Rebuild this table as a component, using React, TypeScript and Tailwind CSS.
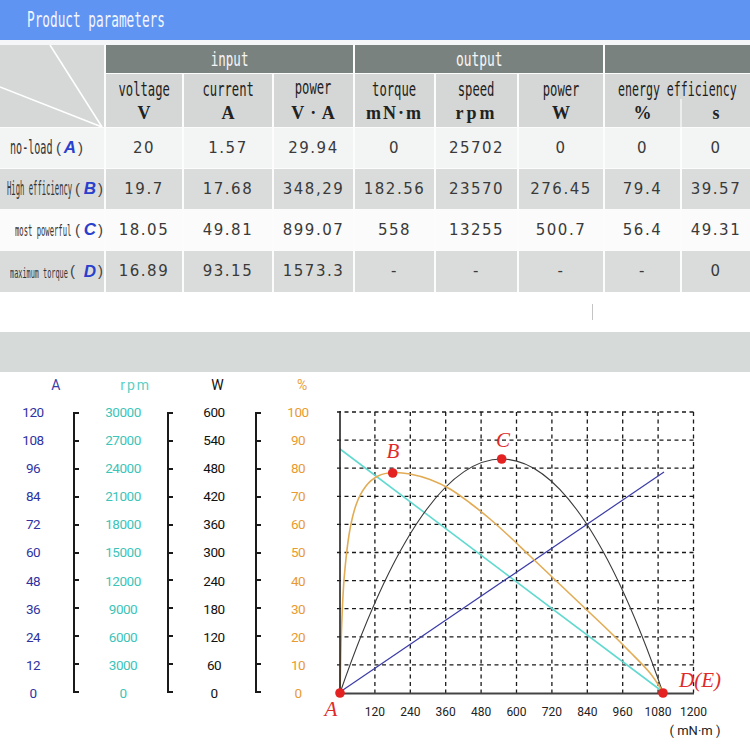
import React from "react";

const mono = "font-['DejaVu_Sans_Mono',monospace]";

function C({ children, cls }: { children: React.ReactNode; cls: string }) {
  return <span className={`inline-block whitespace-nowrap ${cls}`}>{children}</span>;
}

function H2({ label, unit, unitCls = "", labelCls = "scale-x-[0.61]" }: { label: string; unit: string; unitCls?: string; labelCls?: string }) {
  return (
    <div className="bg-[#d4d7d6] flex flex-col items-center pt-[5px]">
      <div className="h-[20px] w-full flex items-center justify-center">
        <C cls={`${mono} text-[20px] leading-[20px] text-[#1e1e1e] ${labelCls}`}>{label}</C>
      </div>
      <div className={`mt-[4px] h-[20px] leading-[20px] font-['Liberation_Serif',serif] font-bold text-[18px] text-[#222] ${unitCls}`}>
        {unit}
      </div>
    </div>
  );
}

function Cell({ v, bg }: { v: string; bg: string }) {
  return (
    <div className={`${bg} flex items-center justify-center font-['DejaVu_Sans',sans-serif] text-[15px] tracking-[1.5px] text-[#3a3a3a]`}>
      {v}
    </div>
  );
}

const letterCls = "font-['Liberation_Sans',sans-serif] font-bold italic text-[17px] text-center text-[#2a40cc]";
const parenCls = "font-['Liberation_Sans',sans-serif] text-[15px] text-[#444]";

const rows: { bg: string; vals: string[] }[] = [
  { bg: "bg-[#f3f4f4]", vals: ["20", "1.57", "29.94", "0", "25702", "0", "0", "0"] },
  { bg: "bg-[#d9dcdb]", vals: ["19.7", "17.68", "348,29", "182.56", "23570", "276.45", "79.4", "39.57"] },
  { bg: "bg-[#fbfbfb]", vals: ["18.05", "49.81", "899.07", "558", "13255", "500.7", "56.4", "49.31"] },
  { bg: "bg-[#d9dcdb]", vals: ["16.89", "93.15", "1573.3", "-", "-", "-", "-", "0"] },
];

function RowLabel({ i }: { i: number }) {
  if (i === 0)
    return (
      <div className="bg-[#f3f4f4] flex items-center pl-[10px]">
        <span className="w-[46px]"><C cls={`${mono} text-[19px] leading-[20px] text-[#333] scale-x-[0.53] origin-left`}>no-load</C></span>
        <span className={`w-[6px] ${parenCls}`}>(</span>
        <span className={`w-[16px] ${letterCls}`}>A</span>
        <span className={`w-[6px] ${parenCls}`}>)</span>
      </div>
    );
  if (i === 1)
    return (
      <div className="bg-[#d9dcdb] flex items-center pl-[7px]">
        <span className="w-[68px]"><C cls={`${mono} text-[19px] leading-[20px] text-[#333] scale-x-[0.38] origin-left`}>High efficiency</C></span>
        <span className={`w-[7px] ${parenCls}`}>(</span>
        <span className={`w-[16px] ${letterCls}`}>B</span>
        <span className={`w-[5px] ${parenCls}`}>)</span>
      </div>
    );
  if (i === 2)
    return (
      <div className="bg-[#fbfbfb] flex items-center pl-[15px]">
        <span className="w-[60px]"><C cls={`${mono} text-[15px] leading-[16px] text-[#333] scale-x-[0.48] origin-left`}>most powerful</C></span>
        <span className={`w-[7px] ${parenCls}`}>(</span>
        <span className={`w-[16px] ${letterCls}`}>C</span>
        <span className={`w-[5px] ${parenCls}`}>)</span>
      </div>
    );
  return (
    <div className="bg-[#d9dcdb] flex items-center pl-[10px]">
      <span className="w-[60px]"><C cls={`${mono} text-[14px] leading-[16px] text-[#333] scale-x-[0.49] origin-left`}>maximum torque</C></span>
      <span className={`w-[12px] ${parenCls}`}>(</span>
      <span className={`w-[16px] ${letterCls}`}>D</span>
      <span className={`w-[5px] ${parenCls}`}>)</span>
    </div>
  );
}

function ValCol({ vals, cls }: { vals: string[]; cls: string }) {
  return (
    <div className={`w-[40px] h-[297px] flex flex-col justify-between items-center ${cls}`}>
      {vals.map((v, i) => (
        <span key={i} className="h-[16px] leading-[16px] whitespace-nowrap">{v}</span>
      ))}
    </div>
  );
}

function Bracket() {
  return (
    <div className="w-[6px] h-[281px] mt-[8px] border-l-2 border-b-2 border-[#1a1a1a] flex flex-col">
      {Array.from({ length: 10 }).map((_, i) => (
        <div key={i} className="h-[28.1px] border-t-2 border-[#1a1a1a]" />
      ))}
    </div>
  );
}

function smooth(pts: number[][]) {
  let d = `M${pts[0][0]} ${pts[0][1]}`;
  for (let i = 0; i < pts.length - 1; i++) {
    const p0 = pts[i - 1] || pts[i];
    const p1 = pts[i];
    const p2 = pts[i + 1];
    const p3 = pts[i + 2] || p2;
    const c1x = p1[0] + (p2[0] - p0[0]) / 6;
    const c1y = p1[1] + (p2[1] - p0[1]) / 6;
    const c2x = p2[0] - (p3[0] - p1[0]) / 6;
    const c2y = p2[1] - (p3[1] - p1[1]) / 6;
    d += ` C${c1x.toFixed(1)} ${c1y.toFixed(1)} ${c2x.toFixed(1)} ${c2y.toFixed(1)} ${p2[0]} ${p2[1]}`;
  }
  return d;
}

const orange = [
  [340, 693], [341.5, 630], [344, 580], [349, 535], [356, 505], [366, 486], [378, 476], [393, 472.5],
  [410, 474], [430, 479.5], [450, 489], [470, 503], [490, 519], [510, 537], [530, 556], [550, 575],
  [570, 594], [590, 613], [610, 632], [630, 652], [650, 673], [663, 692],
];

function Plot() {
  const xs = Array.from({ length: 10 }, (_, i) => 339.5 + 35.4 * (i + 1));
  const ys = Array.from({ length: 10 }, (_, i) => 693 - 28.1 * (i + 1));
  const dash = { stroke: "#1a1a1a", strokeWidth: 1.3, strokeDasharray: "4 3.5" };
  const red = "#e52222";
  return (
    <svg width="430" height="374" viewBox="320 372 430 374" className="block">
      {xs.map((x, i) => (
        <line key={"v" + i} x1={x} y1={412} x2={x} y2={693} {...dash} />
      ))}
      {ys.map((y, i) => (
        <line key={"h" + i} x1={337} y1={y} x2={694} y2={y} {...dash} />
      ))}
      <path d="M340 449 L663 692" stroke="#62d9d0" strokeWidth="1.6" fill="none" />
      <path d="M340 692 L664 472" stroke="#3b3ba8" strokeWidth="1.2" fill="none" />
      <path d="M340 693 Q501.7 225 663 693" stroke="#3a3a3a" strokeWidth="1.1" fill="none" />
      <path d={smooth(orange)} stroke="#e2ac55" strokeWidth="1.6" fill="none" />
      <line x1={340} y1={411} x2={340} y2={694} stroke="#222" strokeWidth="1.6" />
      <line x1={340} y1={693.5} x2={694} y2={693.5} stroke="#444" strokeWidth="2" />
      <circle cx={340} cy={693} r={4.8} fill={red} />
      <circle cx={392.7} cy={473} r={4.8} fill={red} />
      <circle cx={501.7} cy={459} r={4.8} fill={red} />
      <circle cx={663} cy={693} r={4.8} fill={red} />
      <g fontFamily="'Liberation Serif', serif" fontStyle="italic" fontSize="21" fill="#e02a2a">
        <text x={331} y={716} textAnchor="middle">A</text>
        <text x={393} y={458} textAnchor="middle">B</text>
        <text x={503} y={447} textAnchor="middle">C</text>
        <text x={700} y={687} textAnchor="middle">D(E)</text>
      </g>
      <g fontFamily="Roboto, sans-serif" fontSize="12" fill="#222" textAnchor="middle">
        {xs.map((x, i) => (
          <text key={"t" + i} x={x} y={716}>{(i + 1) * 120}</text>
        ))}
        <text x={695} y={735} fontSize="13">( mN·m )</text>
      </g>
    </svg>
  );
}

export default function App() {
  const aVals = ["120", "108", "96", "84", "72", "60", "48", "36", "24", "12", "0"];
  const rVals = ["30000", "27000", "24000", "21000", "18000", "15000", "12000", "9000", "6000", "3000", "0"];
  const wVals = ["600", "540", "480", "420", "360", "300", "240", "180", "120", "60", "0"];
  const pVals = ["100", "90", "80", "70", "60", "50", "40", "30", "20", "10", "0"];
  return (
    <div className="w-[750px] h-[746px] overflow-hidden bg-white">
      <div className="h-[40px] bg-[#5f94f2] flex items-center pl-[27px]">
        <C cls={`${mono} text-[21px] leading-[24px] text-[#f2f6ff] scale-x-[0.606] origin-left`}>Product parameters</C>
      </div>
      <div className="h-[5px] bg-[#f4f6f8]" />
      <div className="grid grid-cols-[104px_76px_88px_79px_79px_81px_84px_75px_68px] grid-rows-[28px_53px_40px_40px_40px_41px] gap-x-[2px] gap-y-px bg-[#fcfcfc]">
        <div className="row-span-2 bg-[#d5d8d7]">
          <svg className="block w-full h-full" viewBox="0 0 104 82" preserveAspectRatio="none">
            <line x1="50" y1="0" x2="102" y2="82" stroke="#ffffff" strokeWidth="1.6" />
            <line x1="0" y1="42" x2="102" y2="82" stroke="#ffffff" strokeWidth="1.6" />
          </svg>
        </div>
        <div className="col-span-3 bg-[#7a827f] flex items-center justify-center">
          <C cls={`${mono} text-[19px] leading-[20px] text-[#f5f5f5] scale-x-[0.66]`}>input</C>
        </div>
        <div className="col-span-3 bg-[#7a827f] flex items-center justify-center">
          <C cls={`${mono} text-[19px] leading-[20px] text-[#f5f5f5] scale-x-[0.68]`}>output</C>
        </div>
        <div className="col-span-2 bg-[#7a827f]" />

        <H2 label="voltage" unit="V" />
        <H2 label="current" unit="A" />
        <H2 label="power" unit="V · A" unitCls="tracking-[1px]" labelCls="scale-x-[0.61] -translate-y-[2px]" />
        <H2 label="torque" unit="mN·m" unitCls="tracking-[2px]" />
        <H2 label="speed" unit="rpm" unitCls="tracking-[3px]" />
        <H2 label="power" unit="W" />
        <div className="col-span-2 bg-[#d4d7d6] flex flex-col">
          <div className="pt-[5px] h-[25px] flex justify-center">
            <C cls={`${mono} text-[20px] leading-[20px] text-[#1e1e1e] scale-x-[0.58]`}>energy efficiency</C>
          </div>
          <div className="flex flex-1 font-['Liberation_Serif',serif] font-bold text-[18px] leading-[20px] text-[#222]">
            <div className="w-[75px] flex justify-center pt-[4px]">%</div>
            <div className="flex-1 border-l-2 border-[#eceeed] flex justify-center pt-[4px]">s</div>
          </div>
        </div>

        {rows.map((r, i) => (
          <React.Fragment key={i}>
            <RowLabel i={i} />
            {r.vals.map((v, j) => (
              <Cell key={j} v={v} bg={r.bg} />
            ))}
          </React.Fragment>
        ))}
      </div>
      <div className="h-[40px] flex">
        <div className="ml-[592px] mt-[12px] w-px h-[16px] bg-[#c4c4c4]" />
      </div>
      <div className="h-[40px] bg-[#d6dad9]" />
      <div className="h-[374px] flex">
        <div className="w-[320px] flex flex-col font-['Roboto',sans-serif]">
          <div className="h-[32px] flex pt-[5px] text-[14px] leading-[16px]">
            <span className="ml-[38px] w-[40px] text-center text-[#3a3ea8]">A</span>
            <span className="ml-[44px] w-[40px] text-center text-[#5dcfc5] tracking-[2px]">rpm</span>
            <span className="ml-[46px] w-[40px] text-center text-[#111]">W</span>
            <span className="ml-[49px] w-[40px] text-center text-[#eba040]">%</span>
          </div>
          <div className="flex text-[13.5px] tracking-[-0.5px]">
            <div className="ml-[13px]"><ValCol vals={aVals} cls="text-[#2e33a3]" /></div>
            <div className="ml-[20px]"><Bracket /></div>
            <div className="ml-[24px]"><ValCol vals={rVals} cls="text-[#3cc4b8]" /></div>
            <div className="ml-[24px]"><Bracket /></div>
            <div className="ml-[21px]"><ValCol vals={wVals} cls="text-[#111]" /></div>
            <div className="ml-[21px]"><Bracket /></div>
            <div className="ml-[17px]"><ValCol vals={pVals} cls="text-[#e99a30]" /></div>
          </div>
        </div>
        <Plot />
      </div>
    </div>
  );
}
